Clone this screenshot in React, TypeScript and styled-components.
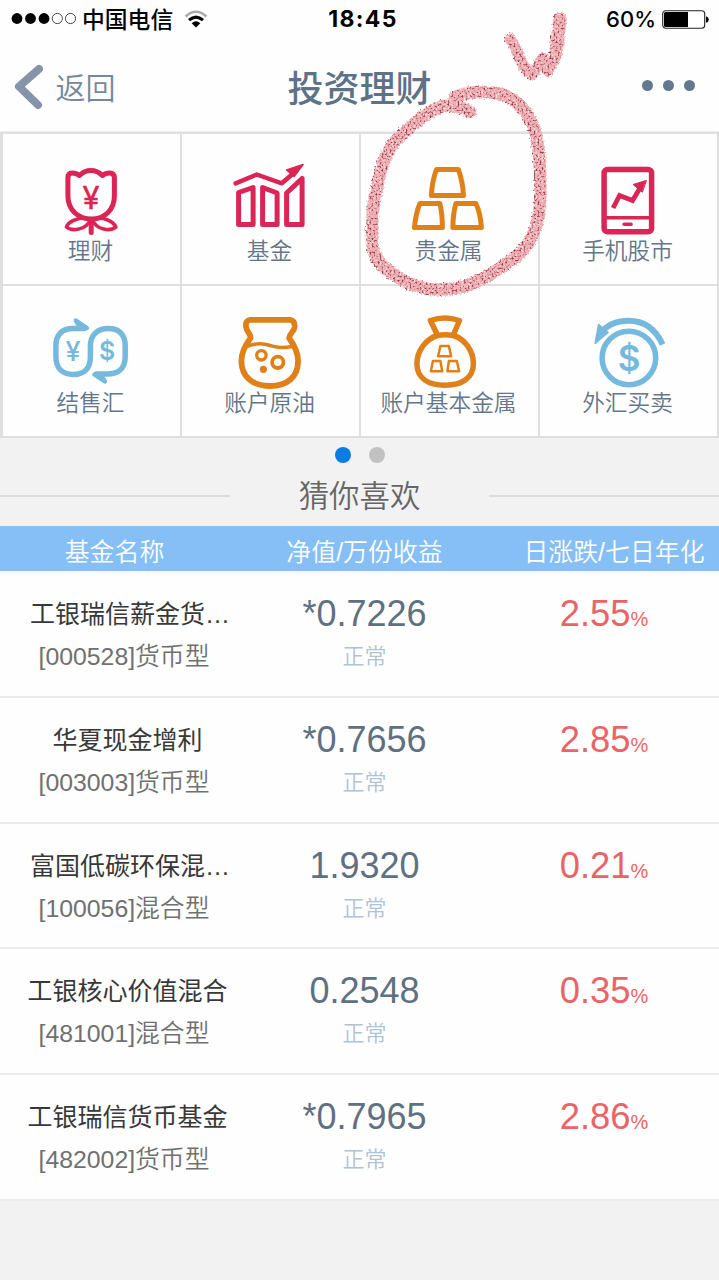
import React from 'react';
import styled, { createGlobalStyle } from 'styled-components';

const RED = '#da2556';
const ORANGE = '#e08019';
const BLUE = '#76b9de';
const SLATE = '#647689';

const GlobalStyle = createGlobalStyle`
  * { box-sizing: border-box; }
  body {
    margin: 0;
    background: #f2f2f2;
    font-family: 'Liberation Sans', 'Noto Sans CJK SC', sans-serif;
  }
`;

const Screen = styled.div`
  position: relative;
  width: 719px;
  height: 1280px;
  overflow: hidden;
  background: #f2f2f2;
`;

const StatusBar = styled.div`
  display: grid;
  grid-template-columns: 1fr auto 1fr;
  align-items: center;
  height: 38px;
  padding: 0 10px 0 11px;
  background: #fefefe;
  color: #000;
`;

const StatusGroup = styled.div<{ $end?: boolean }>`
  display: flex;
  align-items: center;
  justify-content: ${(p) => (p.$end ? 'flex-end' : 'flex-start')};
  gap: 6px;
`;

const Carrier = styled.span`
  padding-bottom: 1px;
  font: 500 22.8px/34px 'Noto Sans CJK SC', sans-serif;
`;

const Clock = styled.span`
  padding-left: 6px;
  font: 700 23px/38px Inter, sans-serif;
  letter-spacing: 1.3px;
`;

const BatteryText = styled.span`
  font: 500 22px/38px Inter, sans-serif;
`;

const NavBar = styled.div`
  display: grid;
  grid-template-columns: 1fr auto 1fr;
  align-items: center;
  height: 93px;
  padding: 4px 24px 0 12px;
  background: #fefefe;
`;

const Back = styled.div`
  display: flex;
  align-items: center;
  gap: 9.5px;
  color: #78889b;
  font: 350 30px/40px 'Noto Sans CJK SC', sans-serif;
`;

const BackLabel = styled.span`
  padding-bottom: 1px;
`;

const Title = styled.h1`
  margin: -2px 0 0 12px;
  color: #5d7286;
  font: 500 36px/50px 'Noto Sans CJK SC', sans-serif;
`;

const More = styled.div`
  display: flex;
  justify-content: flex-end;
  gap: 10px;
  padding-bottom: 3px;
`;

const MoreDot = styled.i`
  width: 11px;
  height: 11px;
  border-radius: 50%;
  background: #63798e;
`;

const Grid = styled.div`
  display: grid;
  grid-template-columns: repeat(4, 1fr);
  grid-template-rows: 150px 150px;
  gap: 2px;
  padding: 2px 2px 2px 3px;
  border-top: 0.5px solid #eee;
  background: #dfdfdf;
`;

const Cell = styled.div`
  display: flex;
  flex-direction: column;
  align-items: center;
  padding: 28px 2px 0 0;
  background: #fefefe;
`;

const CellIcon = styled.svg`
  display: block;
  flex: none;
  width: 90px;
  height: 74px;
  overflow: visible;
  fill: none;
  stroke-linecap: round;
  stroke-linejoin: round;
`;

const CellLabel = styled.span`
  height: 28px;
  margin-top: -1px;
  color: ${SLATE};
  font: 350 22.7px/30px 'Noto Sans CJK SC', sans-serif;
  white-space: nowrap;
`;

const Pager = styled.div`
  display: flex;
  justify-content: center;
  gap: 18px;
  padding-top: 9px;
`;

const PageDot = styled.i<{ $active?: boolean }>`
  width: 16px;
  height: 16px;
  border-radius: 50%;
  background: ${(p) => (p.$active ? '#0b7ce6' : '#c1c1c1')};
`;

const SectionTitle = styled.div`
  display: flex;
  align-items: center;
  justify-content: space-between;
  height: 63px;
  color: #666;
  font: 350 30.4px/44px 'Noto Sans CJK SC', sans-serif;
`;

const SectionLabel = styled.span`
  padding-bottom: 1px;
`;

const Rule = styled.i`
  width: 230px;
  height: 2px;
  margin-top: 2px;
  background: #dcdcdc;
`;

const TableHead = styled.div`
  display: grid;
  grid-template-columns: 229px 271px 1fr;
  align-items: center;
  height: 45px;
  padding-top: 3px;
  background: #86bef6;
  color: #fff;
  font: 350 24.9px/46px 'Liberation Sans', 'Noto Sans CJK SC', sans-serif;
  text-align: center;
  white-space: nowrap;
`;

const LastHead = styled.span`
  padding-left: 9px;
`;

const Row = styled.div`
  display: grid;
  grid-template-columns: 255px 219px 1fr;
  height: 125.8px;
  padding-top: 21px;
  border-bottom: 2px solid #ececec;
  background: #fefefe;
  text-align: center;
  white-space: nowrap;
`;

const FundList = styled.div`
  padding-top: 1px;
  background: #fefefe;
`;

const FundName = styled.div<{ $clipped?: boolean }>`
  padding-left: ${(p) => (p.$clipped ? '5px' : '0')};
  color: #383838;
  font-size: 25px;
  line-height: 42px;
`;

const FundCode = styled.div`
  padding-right: 7px;
  color: #707070;
  font-size: 24.8px;
  font-weight: 350;
  line-height: 43px;
`;

const NetValue = styled.div`
  color: #5e7081;
  font-size: 36px;
  line-height: 42px;
`;

const State = styled.div`
  color: #b0c3d5;
  font: 350 22px/39px 'Noto Sans CJK SC', sans-serif;
`;

const Change = styled.div`
  padding-left: 15px;
  color: #ea6467;
  font-size: 36.4px;
  line-height: 42px;
`;

const Percent = styled.small`
  font-size: 20px;
`;

const Marks = styled.svg`
  position: absolute;
  top: 0;
  left: 0;
  pointer-events: none;
`;

const symbol = { fontFamily: 'Inter, sans-serif', textAnchor: 'middle' as const, stroke: 'none' };

const TulipIcon = () => (
  <CellIcon viewBox="45.6 162 90 74" stroke={RED} strokeWidth="5">
    <path d="M67.5 178Q67.500 173 71.500 173Q76 173 79 175.500Q84 170.500 90.500 170.500Q97 170.500 102 175.500Q105 173 109.500 173Q114 173 114 178V196C114 210 104 219 91 219C78 219 67.500 210 67.500 196Z" />
    <path strokeWidth="3.6" d="M90 219.5C80 216 68 221 66 227C71 231.5 86 230.5 90 219.5ZM92 219.5C102 216 113 221 115.5 227C110 231.5 96 230.5 92 219.5Z" />
    <path d="M90.8 220V232.5" />
    <text x="90.7" y="208.5" fontSize="31" fontWeight="400" fill={RED} {...symbol} stroke={RED} strokeWidth="0.5">¥</text>
  </CellIcon>
);

const BarsIcon = () => (
  <CellIcon viewBox="224.9 162 90 74" stroke={RED} strokeWidth="5">
    <path d="M238.5 192.5L253 187.5V224.5H238.5ZM262.5 187.5L277 193V224.5H262.5ZM286.5 193L302 178.5V224.5H286.5Z" />
    <path strokeWidth="4.5" d="M235.5 183.3L256.7 174.5L281.7 183.3L296 171" />
    <path strokeWidth="1.5" fill={RED} d="M303 164.5L286.5 170L294 176.5Z" />
  </CellIcon>
);

const IngotsIcon = () => (
  <CellIcon viewBox="404.1 162 90 74" stroke={ORANGE} strokeWidth="5">
    <path d="M436.5 169.5H458.5Q463 182 463.5 195.5H431.5Q432 182 436.5 169.5ZM420 203.5H440Q442.5 214 442.5 227.5H414.5Q416 213 420 203.5ZM456 203.5H476Q480.5 213 481.5 227.5H453Q453 214 456 203.5Z" />
  </CellIcon>
);

const PhoneIcon = () => (
  <CellIcon viewBox="583.4 162 90 74" stroke={RED} strokeWidth="5.5">
    <rect x="604.5" y="169.5" width="47.5" height="62.3" rx="3.5" />
    <path strokeWidth="3.6" d="M605 217.7H652M624.5 224.3H631.5" />
    <path strokeLinecap="butt" strokeLinejoin="miter" strokeWidth="4.8" d="M613.5 208L620 195.5L633 200.5L641 187" />
    <path strokeWidth="1" fill={RED} d="M646.5 180.5L633.5 184.5L642.5 192Z" />
  </CellIcon>
);

const ExchangeIcon = () => (
  <CellIcon viewBox="45.6 314 90 74" stroke={BLUE} strokeWidth="5.5">
    <path d="M84 328.5H73C61 328.5 55.5 335 55.5 346V357C55.5 368 62 374.5 73 374.5C84 374.5 90 368 90 357V346C90 335 97 328.5 108 328.5C119 328.5 124.8 335 124.8 346V357C124.8 368 118 374 107 374H96" />
    <path fill={BLUE} strokeWidth="4.5" d="M75.5 320.5L86.5 328H80ZM104.5 381.5L94 374.5H100Z" />
    <text x="72.5" y="360.5" fontSize="27" fontWeight="500" fill={BLUE} {...symbol}>¥</text>
    <text x="106.7" y="360.3" fontSize="25" fontWeight="600" fill={BLUE} {...symbol}>$</text>
  </CellIcon>
);

const FlaskIcon = () => (
  <CellIcon viewBox="224.9 314 90 74" stroke={ORANGE} strokeWidth="5.8">
    <path d="M250 319.8H290Q295 320.5 294.5 327C294 332 289.5 333 289 338C294 345 298 352 298 361C298 377 287 386 270 386C253 386 241.3 377 241.3 361C241.3 352 246 344 250.5 338C250.5 333 246.5 332 246 327Q245 320.5 250 319.8Z" />
    <path strokeWidth="3.5" d="M248 346C259 342 267 344.5 274 346.5Q282 348.5 292 346.5" />
    <circle cx="261.3" cy="355.3" r="4.7" strokeWidth="3.3" />
    <circle cx="277.7" cy="362.3" r="5.7" strokeWidth="3.8" />
    <circle cx="263.3" cy="369.3" r="3.6" fill={ORANGE} stroke="none" />
  </CellIcon>
);

const BagIcon = () => (
  <CellIcon viewBox="404.1 314 90 74" stroke={ORANGE} strokeWidth="5.5">
    <path d="M437.5 335L430.5 320.5Q438 318 445 318Q452 318 459.5 320.5L453.5 335" />
    <path d="M437.5 335.5Q445.5 334 453.5 335.5C465 339 473.5 351 473.5 363.5C473.5 378 462 385.3 445.5 385.3C428 385.3 417 378 417 363.5C417 351 426 339 437.5 335.5Z" />
    <path strokeWidth="2.5" d="M440.5 346H449L451.2 356.3H438.2ZM433 361H440.5L442.3 371.3H431ZM449 361H457L459.2 371.3H447.5Z" />
  </CellIcon>
);

const DollarIcon = () => (
  <CellIcon viewBox="583.4 314 90 74" stroke={BLUE} strokeWidth="5.5">
    <circle cx="629.3" cy="358" r="26.8" />
    <path strokeLinecap="butt" strokeWidth="6" d="M663 344.5C656 329 644 320.700 629 320.700C616 320.700 607 325 600 334" />
    <path strokeWidth="1.5" fill={BLUE} d="M599 324.5L595.5 343.5L608.5 332.5Z" />
    <text x="629.6" y="370.7" fontSize="35" fontWeight="600" fill={BLUE} {...symbol}>$</text>
  </CellIcon>
);

const services: [string, React.FC][] = [
  ['理财', TulipIcon],
  ['基金', BarsIcon],
  ['贵金属', IngotsIcon],
  ['手机股市', PhoneIcon],
  ['结售汇', ExchangeIcon],
  ['账户原油', FlaskIcon],
  ['账户基本金属', BagIcon],
  ['外汇买卖', DollarIcon],
];

const funds = [
  { name: '工银瑞信薪金货…', code: '000528', kind: '货币型', value: '*0.7226', change: '2.55' },
  { name: '华夏现金增利', code: '003003', kind: '货币型', value: '*0.7656', change: '2.85' },
  { name: '富国低碳环保混…', code: '100056', kind: '混合型', value: '1.9320', change: '0.21' },
  { name: '工银核心价值混合', code: '481001', kind: '混合型', value: '0.2548', change: '0.35' },
  { name: '工银瑞信货币基金', code: '482002', kind: '货币型', value: '*0.7965', change: '2.86' },
];

const SignalIcon = () => (
  <svg width="65" height="14" viewBox="0 0 65 14">
    {[6, 19.5, 33].map((x) => (
      <circle key={x} cx={x} cy="6.5" r="5.4" />
    ))}
    {[46.3, 59.5].map((x) => (
      <circle key={x} cx={x} cy="6.5" r="5.1" fill="none" stroke="#333" strokeWidth="0.9" />
    ))}
  </svg>
);

const WifiSvg = styled.svg`
  margin: 0 0 1px 5px;
`;

const WifiIcon = () => (
  <WifiSvg width="24" height="18" viewBox="0 0 24 18" fill="none">
    <path d="M1.5 6.5Q12 -3 22.5 6.5" stroke="#aaa" strokeWidth="2.6" />
    <path d="M5 10.2Q12 4 19 10.2" stroke="#000" strokeWidth="3" />
    <path d="M12 17.5L7.7 13.2Q12 9.5 16.3 13.2Z" fill="#000" />
  </WifiSvg>
);

const BatteryIcon = () => (
  <svg width="47" height="19" viewBox="0 0 47 19">
    <rect x="0.7" y="0.7" width="42" height="17.6" rx="3" fill="#fff" stroke="#222" strokeWidth="1.1" />
    <path d="M3.5 2H26V17H3.5Q2 17 2 15.5V3.5Q2 2 3.5 2Z" />
    <path d="M44 6.3Q46.8 7 46.8 9.5Q46.8 12 44 12.7Z" />
  </svg>
);

const App = () => (
  <>
    <GlobalStyle />
    <Screen>
      <StatusBar>
        <StatusGroup>
          <SignalIcon />
          <Carrier>中国电信</Carrier>
          <WifiIcon />
        </StatusGroup>
        <Clock>18:45</Clock>
        <StatusGroup $end>
          <BatteryText>60%</BatteryText>
          <BatteryIcon />
        </StatusGroup>
      </StatusBar>
      <NavBar>
        <Back>
          <svg width="34" height="48" viewBox="0 0 34 48" fill="none">
            <path d="M27 6L7 23.5L26 42" stroke="#8494aa" strokeWidth="8" strokeLinecap="round" strokeLinejoin="round" />
          </svg>
          <BackLabel>返回</BackLabel>
        </Back>
        <Title>投资理财</Title>
        <More>
          <MoreDot />
          <MoreDot />
          <MoreDot />
        </More>
      </NavBar>
      <Grid>
        {services.map(([label, Icon]) => (
          <Cell key={label}>
            <Icon />
            <CellLabel>{label}</CellLabel>
          </Cell>
        ))}
      </Grid>
      <Pager>
        <PageDot $active />
        <PageDot />
      </Pager>
      <SectionTitle>
        <Rule />
        <SectionLabel>猜你喜欢</SectionLabel>
        <Rule />
      </SectionTitle>
      <TableHead>
        <span>基金名称</span>
        <span>净值/万份收益</span>
        <LastHead>日涨跌/七日年化</LastHead>
      </TableHead>
      <FundList>
        {funds.map((f) => (
          <Row key={f.code}>
            <div>
              <FundName $clipped={f.name.endsWith('…')}>{f.name}</FundName>
              <FundCode>[{f.code}]{f.kind}</FundCode>
            </div>
            <div>
              <NetValue>{f.value}</NetValue>
              <State>正常</State>
            </div>
            <Change>
              {f.change}
              <Percent>%</Percent>
            </Change>
          </Row>
        ))}
      </FundList>
      <Marks width="719" height="310" viewBox="0 0 719 310">
        <defs>
          <filter id="crayon" x="350" y="0" width="230" height="310" filterUnits="userSpaceOnUse" colorInterpolationFilters="sRGB">
            <feTurbulence type="fractalNoise" baseFrequency="0.5" numOctaves="2" seed="4" result="noise" />
            <feDisplacementMap in="SourceGraphic" in2="noise" scale="5" xChannelSelector="R" yChannelSelector="G" result="rough" />
            <feColorMatrix in="noise" type="matrix" values="0 0 0 0 0.6  0 0 0 0 0.22  0 0 0 0 0.28  4 0 0 0 -2" result="dark" />
            <feColorMatrix in="noise" type="matrix" values="0 0 0 0 1  0 0 0 0 0.9  0 0 0 0 0.9  0 0 4 0 -2" result="light" />
            <feComposite in="light" in2="rough" operator="in" result="lightIn" />
            <feComposite in="dark" in2="rough" operator="in" result="darkIn" />
            <feMerge>
              <feMergeNode in="rough" />
              <feMergeNode in="lightIn" />
              <feMergeNode in="darkIn" />
            </feMerge>
          </filter>
        </defs>
        <g filter="url(#crayon)" fill="none" stroke="#efaeb3" strokeWidth="12.5" strokeLinecap="round" strokeLinejoin="round">
          <path d="M470 112C462 107 452 105 443 106C427 111 411 126 398 138C386 150 380 170 377 188C372 205 372 225 372 243C374 262 386 270 402 280C420 290 440 291 458 288C480 283 500 269 519 254C532 242 538 226 540 205C541 180 541 155 535 131C529 113 517 100 502 94C487 91 470 91 455 97" />
          <path strokeWidth="11" d="M510 39C517 48 519 60 525 68L532 75L543 58L548 71L557 54" />
          <path strokeWidth="13.500" d="M556 52L558 36L560 19" />
        </g>
      </Marks>
    </Screen>
  </>
);

export default App;
